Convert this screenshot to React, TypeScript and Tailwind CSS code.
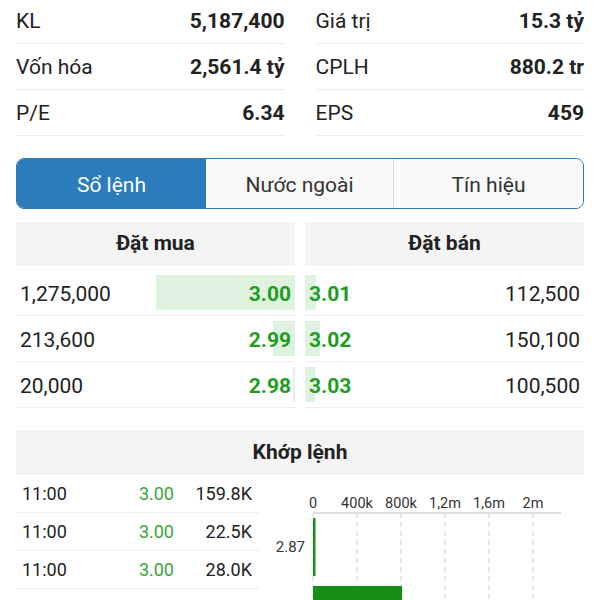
const stats = [
  [
    { label: 'KL', value: '5,187,400' },
    { label: 'Vốn hóa', value: '2,561.4 tỷ' },
    { label: 'P/E', value: '6.34' },
  ],
  [
    { label: 'Giá trị', value: '15.3 tỷ' },
    { label: 'CPLH', value: '880.2 tr' },
    { label: 'EPS', value: '459' },
  ],
];

const buys = [
  { qty: '1,275,000', price: '3.00', pct: 139 },
  { qty: '213,600', price: '2.99', pct: 22 },
  { qty: '20,000', price: '2.98', pct: 2 },
];

const sells = [
  { qty: '112,500', price: '3.01', pct: 11 },
  { qty: '150,100', price: '3.02', pct: 15 },
  { qty: '100,500', price: '3.03', pct: 10 },
];

const trades = [
  { time: '11:00', price: '3.00', vol: '159.8K' },
  { time: '11:00', price: '3.00', vol: '22.5K' },
  { time: '11:00', price: '3.00', vol: '28.0K' },
];

const ticks = ['0', '400k', '800k', '1,2m', '1,6m', '2m'];

function Chart() {
  return (
    <svg width="320" height="126" className="block">
      <line x1="49" y1="38" x2="297" y2="38" stroke="#bdbdbd" strokeWidth="1" />
      {ticks.map((t, i) => (
        <g key={t}>
          <line
            x1={49 + i * 44}
            y1="38"
            x2={49 + i * 44}
            y2="126"
            stroke="#cfcfcf"
            strokeWidth="1"
            strokeDasharray="5 4"
          />
          <text
            x={49 + i * 44}
            y="33"
            textAnchor="middle"
            fontSize="14.5"
            fill="#333"
            fontFamily="Roboto, sans-serif"
          >
            {t}
          </text>
        </g>
      ))}
      <rect x="49" y="43" width="2.5" height="58" fill="#168f16" />
      <text x="41" y="77" textAnchor="end" fontSize="15" fill="#333" fontFamily="Roboto, sans-serif">
        2.87
      </text>
      <rect x="49" y="111" width="89" height="20" fill="#168f16" />
    </svg>
  );
}

export default function App() {
  return (
    <div className="w-[600px] h-[600px] overflow-hidden bg-white px-4 font-['Roboto',sans-serif] text-[#222]">
      {/* stats */}
      <div className="grid grid-cols-2 gap-x-[31px] -mt-[2px]">
        {stats.map((col, ci) => (
          <div key={ci}>
            {col.map((s) => (
              <div
                key={s.label}
                className="h-[46px] pt-[2px] flex items-center justify-between border-b border-[#ececec] text-[21px]"
              >
                <span>{s.label}</span>
                <span className="font-bold">{s.value}</span>
              </div>
            ))}
          </div>
        ))}
      </div>

      {/* tabs */}
      <div className="mt-[22px] h-[51px] flex rounded-[8px] border border-[#2a78b5] overflow-hidden text-[21px]">
        <div className="w-[189px] pt-1 bg-[#2c7cbb] text-white flex items-center justify-center">Sổ lệnh</div>
        <div className="flex-1 pt-1 bg-[#f9f9f9] text-[#333] flex items-center justify-center border-r border-[#dcdcdc]">
          Nước ngoài
        </div>
        <div className="w-[189px] pt-1 bg-[#f9f9f9] text-[#333] flex items-center justify-center">Tín hiệu</div>
      </div>

      {/* order book */}
      <div className="mt-[13px] grid grid-cols-2 gap-x-[10px]">
        <div>
          <div className="h-[44px] bg-[#f4f4f4] flex items-center justify-center font-bold text-[21px]">
            Đặt mua
          </div>
          <div className="mt-[4px]">
            {buys.map((b) => (
              <div key={b.qty} className="h-[46px] border-b border-[#eeeeee] flex items-center relative text-[21px]">
                <div
                  className="absolute right-0 top-[5px] bottom-[5px] bg-[#dff2df]"
                  style={{ width: b.pct }}
                />
                <span className="relative pl-1 pt-[4px]">{b.qty}</span>
                <span className="relative ml-auto pr-1 pt-[4px] font-bold text-[#1f9d1f]">{b.price}</span>
              </div>
            ))}
          </div>
        </div>
        <div>
          <div className="h-[44px] bg-[#f4f4f4] flex items-center justify-center font-bold text-[21px]">
            Đặt bán
          </div>
          <div className="mt-[4px]">
            {sells.map((s) => (
              <div key={s.qty} className="h-[46px] border-b border-[#eeeeee] flex items-center relative text-[21px]">
                <div
                  className="absolute left-0 top-[5px] bottom-[5px] bg-[#dff2df]"
                  style={{ width: s.pct }}
                />
                <span className="relative pl-1 pt-[4px] font-bold text-[#1f9d1f]">{s.price}</span>
                <span className="relative ml-auto pr-1 pt-[4px]">{s.qty}</span>
              </div>
            ))}
          </div>
        </div>
      </div>

      {/* matched */}
      <div className="mt-[22px] h-[45px] bg-[#f4f4f4] flex items-center justify-center font-bold text-[21px]">
        Khớp lệnh
      </div>
      <div className="flex">
        <div className="w-[244px]">
          {trades.map((t, i) => (
            <div key={i} className="h-[38px] border-b border-[#eeeeee] flex items-center text-[18px]">
              <span className="pl-[6px]">{t.time}</span>
              <span className="ml-auto w-[50px] text-right text-[#3aa53a]">{t.price}</span>
              <span className="w-[85px] text-right pr-[7px]">{t.vol}</span>
            </div>
          ))}
        </div>
        <div className="ml-[5px]">
          <Chart />
        </div>
      </div>
    </div>
  );
}
